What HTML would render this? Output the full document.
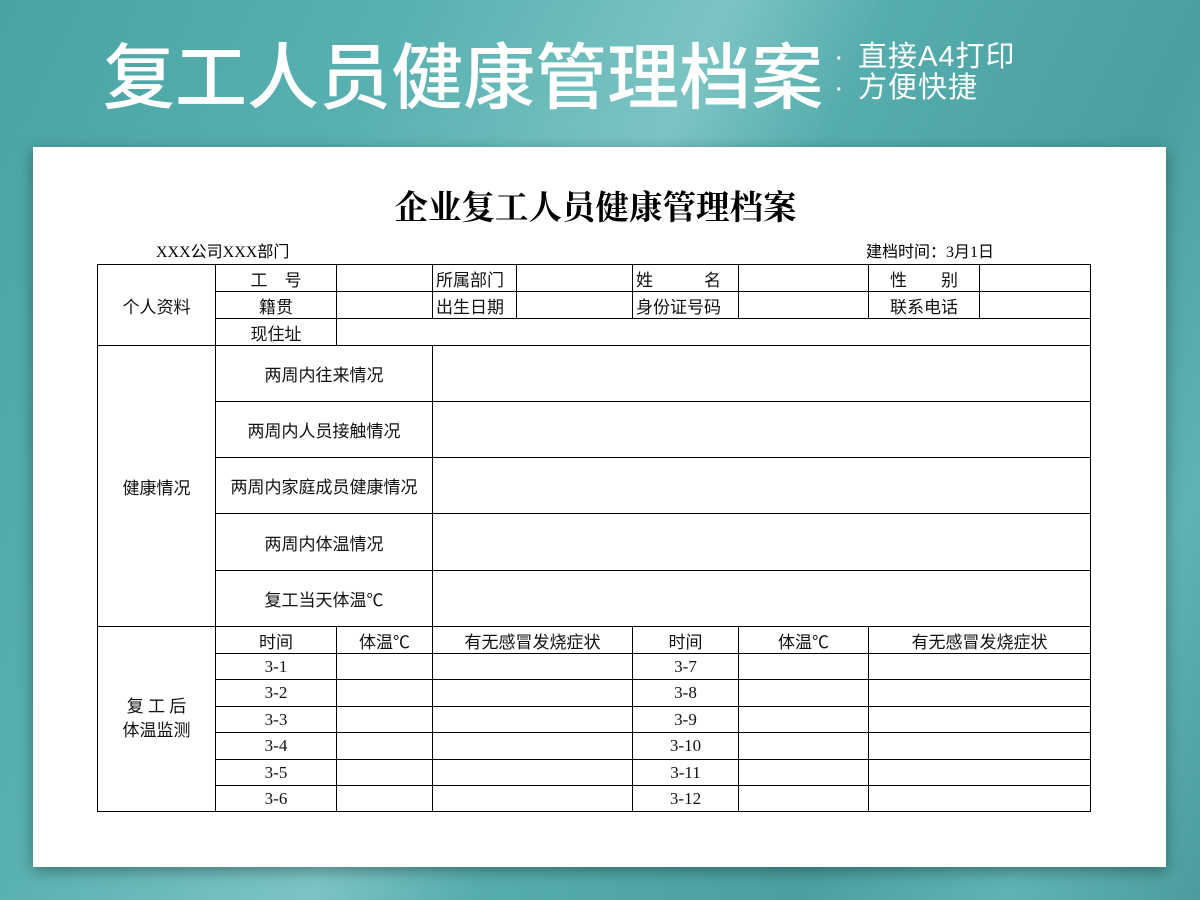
<!DOCTYPE html>
<html><head><meta charset="utf-8"><style>
*{margin:0;padding:0;box-sizing:border-box}
body{width:1200px;height:900px;overflow:hidden;position:relative;
background:linear-gradient(115deg,#4aa3a3 0%,#58b0b0 25%,#7cc4c4 45%,#56adad 55%,#4a9f9f 75%,#5fb3b3 88%,#4b9d9d 100%);
font-family:"Liberation Sans","Noto Sans CJK SC",sans-serif}
.t1{position:absolute;left:103px;top:34px;width:712px;display:flex;justify-content:space-between;font-size:72px;color:#fff;line-height:90px;font-weight:500}
.t2{position:absolute;left:834px;top:42px;font-size:29px;color:#fff;line-height:31px;letter-spacing:1px}
.t2 span{display:inline-block;width:24px}
.paper{position:absolute;left:33px;top:147px;width:1133px;height:720px;background:#fff;box-shadow:0 4px 14px rgba(0,0,0,.35)}
.h{position:absolute;left:-4px;width:1133px;top:40px;text-align:center;font-family:"Liberation Serif","Noto Serif CJK SC",serif;font-weight:bold;font-size:33.5px;line-height:44px}
.c{position:absolute;border:1px solid #000;font-size:17px;display:flex;align-items:center;justify-content:center;color:#111;font-family:"Liberation Serif","Noto Sans CJK SC",sans-serif;white-space:nowrap}
.s{position:absolute;font-size:16px;font-family:"Liberation Serif","Noto Sans CJK SC",serif;line-height:20px}
</style></head><body>
<div class="t1"><span>复</span><span>工</span><span>人</span><span>员</span><span>健</span><span>康</span><span>管</span><span>理</span><span>档</span><span>案</span></div>
<div class="t2"><span>·</span>直接A4打印<br><span>·</span>方便快捷</div>
<div class="paper">
<div class="h">企业复工人员健康管理档案</div>
</div>
<div class="s" style="left:156px;top:243px">XXX公司XXX部门</div>
<div class="s" style="left:866px;top:243px">建档时间：3月1日</div>
<div id="g"></div>
<script>
var g=document.getElementById('g'),h='';
function c(x1,y1,x2,y2,t,st){h+='<div class="c" style="left:'+x1+'px;top:'+y1+'px;width:'+(x2-x1+1)+'px;height:'+(y2-y1+1)+'px;'+(st||'')+'">'+(t||'')+'</div>';}
c(97,264,215,345,'个人资料');
var X=[215,336,432,516,632,738,868,979,1090];
var r1=['工　号','','所属部门','','姓　　　名','','性　　别',''];
var r2=['籍贯','','出生日期','','身份证号码','','联系电话',''];
for(var i=0;i<8;i++){var st=(i==2||i==4)?'justify-content:flex-start;padding-left:3px':'';c(X[i],264,X[i+1],291,r1[i],st);c(X[i],291,X[i+1],318,r2[i],st);}
c(215,318,336,345,'现住址');c(336,318,1090,345,'');
c(97,345,215,626,'健康情况');
var hy=[345,401,457,513,570,626],ht=['两周内往来情况','两周内人员接触情况','两周内家庭成员健康情况','两周内体温情况','复工当天体温℃'];
for(var i=0;i<5;i++){c(215,hy[i],432,hy[i+1],ht[i]);c(432,hy[i],1090,hy[i+1],'');}
c(97,626,215,811,'复 工 后<br>体温监测','text-align:center;line-height:24px');
var BX=[215,336,432,632,738,868,1090],by=[626,653,679,706,732,759,785,811];
var hd=['时间','体温℃','有无感冒发烧症状','时间','体温℃','有无感冒发烧症状'];
for(var r=0;r<7;r++)for(var i=0;i<6;i++){var t='';if(r==0)t=hd[i];else if(i==0)t='3-'+r;else if(i==3)t='3-'+(r+6);c(BX[i],by[r],BX[i+1],by[r+1],t);}
g.innerHTML=h;
</script>
</body></html>
